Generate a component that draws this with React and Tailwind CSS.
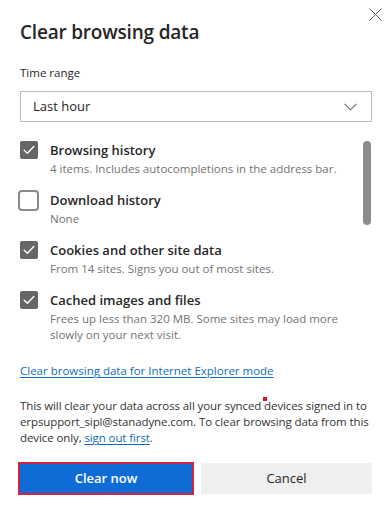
import React from "react";

const Check = ({ checked }) =>
  checked ? (
    <div className="w-[18px] h-[18px] rounded-[2px] bg-[#666666] flex items-center justify-center shrink-0">
      <svg width="12" height="10" viewBox="0 0 12 10" fill="none">
        <path d="M1.2 5.2 L4.4 8.2 L10.8 1.6" stroke="white" strokeWidth="1.4" strokeLinecap="round" strokeLinejoin="round" />
      </svg>
    </div>
  ) : (
    <div className="w-[21px] h-[21px] -ml-[2px] -mt-[1px] rounded-[4px] border-2 border-[#8a8a8a] bg-white shrink-0" />
  );

const Item = ({ checked, title, sub }) => (
  <div className="flex gap-[12px]">
    <div className="pt-[1px] w-[18px]">
      <Check checked={checked} />
    </div>
    <div className="flex-1">
      <div className="text-[13px] leading-[20px] font-semibold text-[#262626]">{title}</div>
      <div className="text-[11.5px] leading-[16px] text-[#737373] mt-[1px]">{sub}</div>
    </div>
  </div>
);

export default function App() {
  return (
    <div
      className="w-[389px] h-[512px] bg-white relative overflow-hidden"
      style={{ fontFamily: '"Open Sans", "Noto Sans", sans-serif' }}
    >
      <button className="absolute right-[7px] top-[7px] w-[14px] h-[14px] flex items-center justify-center">
        <svg width="13" height="13" viewBox="0 0 13 13">
          <path d="M0.5 0.5 L12.5 12.5 M12.5 0.5 L0.5 12.5" stroke="#5a5a5a" strokeWidth="1" />
        </svg>
      </button>
      <div className="pl-[20px] pr-[17px] pt-[19px]">
        <h1 className="text-[19px] leading-[26px] font-semibold text-[#262626] tracking-[-0.2px]">
          Clear browsing data
        </h1>
        <div className="mt-[20px] text-[11.5px] leading-[16px] text-[#262626]">Time range</div>
        <div className="mt-[10px] w-[352px] h-[31px] border border-[#bdbdbd] flex items-center justify-between pl-[12px] pr-[14px]">
          <span className="text-[13px] text-[#262626]">Last hour</span>
          <svg width="13" height="8" viewBox="0 0 13 8" fill="none">
            <path d="M0.5 0.8 L6.5 6.8 L12.5 0.8" stroke="#6b6b6b" strokeWidth="1.1" />
          </svg>
        </div>

        <div className="mt-[18px] flex">
          <div className="flex-1 flex flex-col gap-[13px] pr-[20px]">
            <Item checked title="Browsing history" sub="4 items. Includes autocompletions in the address bar." />
            <Item checked={false} title="Download history" sub="None" />
            <Item checked title="Cookies and other site data" sub="From 14 sites. Signs you out of most sites." />
            <Item
              checked
              title="Cached images and files"
              sub="Frees up less than 320 MB. Some sites may load more slowly on your next visit."
            />
          </div>
          <div className="w-[8px] h-[84px] rounded-full bg-[#8c8c8c] mt-[1px] mr-[1px]" />
        </div>

        <a href="#" className="block mt-[20px] text-[11.5px] leading-[16px] text-[#0f6cbd] underline underline-offset-2">
          Clear browsing data for Internet Explorer mode
        </a>

        <p className="relative mt-[19px] text-[11.5px] leading-[16px] text-[#333333] tracking-[-0.1px] whitespace-nowrap">
          This will clear your data across all your synced devices signed in to
          <br />
          erpsupport_sipl@stanadyne.com. To clear browsing data from this
          <br />
          device only, <a href="#" className="text-[#0f6cbd] underline underline-offset-2">sign out first</a>.
          <span className="absolute left-[243px] -top-[1px] w-[4px] h-[4px] bg-[#d9142a]" />
        </p>

        <div className="mt-[16px] flex gap-[7px] -ml-[2px]">
          <button className="w-[176px] h-[33px] bg-[#0f6cd6] border-[2px] border-[#d4213d] text-white text-[13px] font-semibold">
            Clear now
          </button>
          <button className="flex-1 h-[31px] mt-[1px] bg-[#efefef] text-[#262626] text-[13px]">Cancel</button>
        </div>
      </div>
    </div>
  );
}
